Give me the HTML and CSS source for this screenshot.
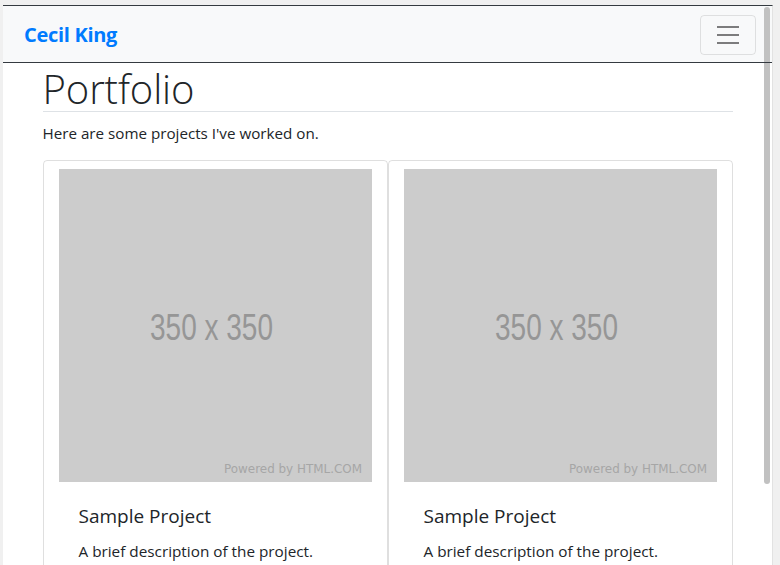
FILE: index.html
```html
<!DOCTYPE html>
<html lang="en">
<head>
<meta charset="utf-8">
<title>Cecil King - Portfolio</title>
<link rel="stylesheet" href="styles.css">
</head>
<body>
<div class="frame">
  <nav class="navbar">
    <a class="brand" href="#">Cecil King</a>
    <button class="toggler" type="button" aria-label="Toggle navigation">
      <svg width="30" height="30" viewBox="0 0 30 30" aria-hidden="true">
        <path d="M4 7h22M4 15h22M4 23h22" stroke="rgba(0,0,0,.5)" stroke-width="2" stroke-linecap="butt" fill="none"/>
      </svg>
    </button>
  </nav>
  <div class="scrollbar"><div class="thumb"></div></div>
  <main class="container">
    <h1 class="page-title">Portfolio</h1>
    <p class="lead-text">Here are some projects I've worked on.</p>
    <div class="cards">
      <div class="card">
        <svg class="thumbimg" width="313" height="313" viewBox="0 0 313 313">
          <rect width="313" height="313" fill="#cccccc"/>
          <text x="91" y="171" textLength="123" lengthAdjust="spacingAndGlyphs" class="ph-main">350 x 350</text>
          <text x="165" y="304" textLength="138" lengthAdjust="spacingAndGlyphs" class="ph-small">Powered by HTML.COM</text>
        </svg>
        <div class="card-body">
          <h5 class="card-title">Sample Project</h5>
          <p class="card-text">A brief description of the project.</p>
        </div>
      </div>
      <div class="card">
        <svg class="thumbimg" width="313" height="313" viewBox="0 0 313 313">
          <rect width="313" height="313" fill="#cccccc"/>
          <text x="91" y="171" textLength="123" lengthAdjust="spacingAndGlyphs" class="ph-main">350 x 350</text>
          <text x="165" y="304" textLength="138" lengthAdjust="spacingAndGlyphs" class="ph-small">Powered by HTML.COM</text>
        </svg>
        <div class="card-body">
          <h5 class="card-title">Sample Project</h5>
          <p class="card-text">A brief description of the project.</p>
        </div>
      </div>
    </div>
  </main>
</div>
</body>
</html>
```
FILE: styles.css
```css
html, body {
  margin: 0;
  padding: 0;
  height: 100%;
  overflow: hidden;
}
body {
  background: #f0f0f0;
  padding: 5px 0 0 3px;
  box-sizing: border-box;
  font-family: "Open Sans", "Noto Sans", sans-serif;
  color: #212529;
}
.frame {
  position: relative;
  width: 769px;
  height: 600px;
  background: #fff;
  border-top: 1px solid #343a40;
  border-right: 1px solid #e2e2e2;
  box-sizing: content-box;
}
.navbar {
  position: relative;
  background: #f8f9fa;
  border-bottom: 1px solid #343a40;
  display: flex;
  align-items: center;
  justify-content: space-between;
  padding: 0 16px 0 21px;
  box-sizing: border-box;
  height: 57px;
}
.navbar::after {
  content: "";
  position: absolute;
  left: 0;
  right: 0;
  bottom: -1px;
  height: 1px;
  background: #343a40;
  z-index: 3;
}
.brand {
  color: #007bff;
  font-weight: 700;
  font-size: 20px;
  text-decoration: none;
  letter-spacing: -0.3px;
}
.toggler {
  width: 56px;
  height: 40px;
  border: 1px solid rgba(0,0,0,.1);
  border-radius: 4px;
  background: transparent;
  display: flex;
  align-items: center;
  justify-content: center;
  padding: 0;
  margin-top: 1px;
}
.scrollbar {
  position: absolute;
  top: 1px;
  right: 2px;
  width: 6px;
  z-index: 2;
}
.thumb {
  height: 477px;
  background: #c1c1c1;
  border-radius: 3px;
}
.container {
  width: 690px;
  margin: 0 auto;
}
.page-title {
  margin: 0 0 8px;
  padding-top: 2px;
  font-size: 40px;
  font-weight: 300;
  line-height: 48px;
  height: 46px;
  border-bottom: 1px solid #dee2e6;
  letter-spacing: -0.1px;
}
.lead-text {
  margin: 0 0 16px;
  font-size: 15.2px;
  line-height: 24px;
  padding-top: 1px;
  height: 23px;
}
.cards {
  display: flex;
}
.card {
  width: 345px;
  border: 1px solid rgba(0,0,0,.125);
  border-radius: 4px;
  box-sizing: border-box;
  padding: 8px 15px 0;
}
.thumbimg {
  display: block;
}
.ph-main {
  font-family: "Liberation Sans", Arial, sans-serif;
  font-size: 36px;
  fill: #969696;
}
.ph-small {
  font-family: "DejaVu Sans", sans-serif;
  font-size: 12px;
  fill: #a6a6a6;
}
.card-body {
  padding: 22px 20px 20px;
}
.card-title {
  margin: 0 0 11px;
  font-size: 19px;
  font-weight: 400;
  line-height: 24px;
}
.card-text {
  margin: 0;
  font-size: 15.3px;
  line-height: 24px;
}
```
